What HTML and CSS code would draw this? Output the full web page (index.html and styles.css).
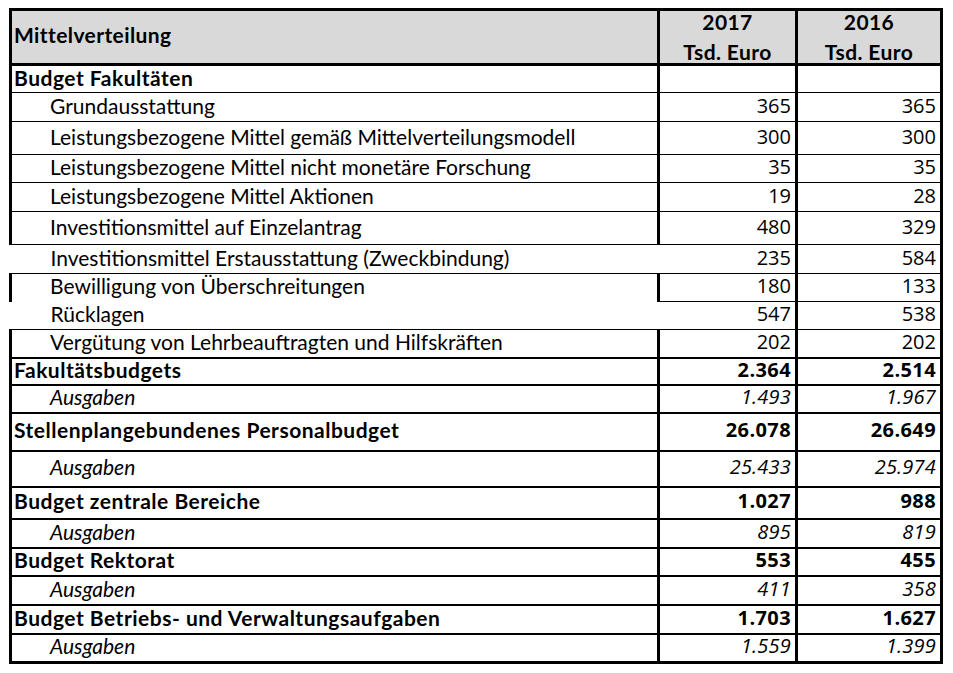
FILE: index.html
```html
<!DOCTYPE html>
<html lang="de">
<head>
<meta charset="utf-8">
<title>Mittelverteilung</title>
<link rel="stylesheet" href="styles.css">
</head>
<body>
<table class="budget">
  <colgroup>
    <col class="col-label">
    <col class="col-2017">
    <col class="col-2016">
  </colgroup>
  <thead>
    <tr class="head">
      <th class="label">Mittelverteilung</th>
      <th class="year"><span class="yr">2017</span><span class="unit">Tsd. Euro</span></th>
      <th class="year"><span class="yr">2016</span><span class="unit">Tsd. Euro</span></th>
    </tr>
  </thead>
  <tbody>
    <tr class="h28"><td class="label b">Budget Fakultäten</td><td></td><td></td></tr>
    <tr class="h29"><td class="label ind">Grundausstattung</td><td class="num">365</td><td class="num">365</td></tr>
    <tr class="h33"><td class="label ind">Leistungsbezogene Mittel gemäß Mittelverteilungsmodell</td><td class="num">300</td><td class="num">300</td></tr>
    <tr class="h28"><td class="label ind">Leistungsbezogene Mittel nicht monetäre Forschung</td><td class="num">35</td><td class="num">35</td></tr>
    <tr class="h29"><td class="label ind">Leistungsbezogene Mittel Aktionen</td><td class="num">19</td><td class="num">28</td></tr>
    <tr class="h33"><td class="label ind">Investitionsmittel auf Einzelantrag</td><td class="num">480</td><td class="num">329</td></tr>
    <tr class="h29 open"><td class="label ind">Investitionsmittel Erstausstattung (Zweckbindung)</td><td class="num">235</td><td class="num">584</td></tr>
    <tr class="h28"><td class="label ind">Bewilligung von Überschreitungen</td><td class="num">180</td><td class="num">133</td></tr>
    <tr class="h28 open open-top"><td class="label ind">Rücklagen</td><td class="num">547</td><td class="num">538</td></tr>
    <tr class="h28"><td class="label ind">Vergütung von Lehrbeauftragten und Hilfskräften</td><td class="num">202</td><td class="num">202</td></tr>
    <tr class="h27 sum"><td class="label b">Fakultätsbudgets</td><td class="num b">2.364</td><td class="num b">2.514</td></tr>
    <tr class="h28 sum"><td class="label ind i">Ausgaben</td><td class="num i">1.493</td><td class="num i">1.967</td></tr>
    <tr class="h38 sum"><td class="label b">Stellenplangebundenes Personalbudget</td><td class="num b">26.078</td><td class="num b">26.649</td></tr>
    <tr class="h36 sum"><td class="label ind i">Ausgaben</td><td class="num i">25.433</td><td class="num i">25.974</td></tr>
    <tr class="h32 sum"><td class="label b">Budget zentrale Bereiche</td><td class="num b">1.027</td><td class="num b">988</td></tr>
    <tr class="h29 sum"><td class="label ind i">Ausgaben</td><td class="num i">895</td><td class="num i">819</td></tr>
    <tr class="h28 sum"><td class="label b">Budget Rektorat</td><td class="num b">553</td><td class="num b">455</td></tr>
    <tr class="h29 sum"><td class="label ind i">Ausgaben</td><td class="num i">411</td><td class="num i">358</td></tr>
    <tr class="h29 sum"><td class="label b">Budget Betriebs- und Verwaltungsaufgaben</td><td class="num b">1.703</td><td class="num b">1.627</td></tr>
    <tr class="h29 sum"><td class="label ind i">Ausgaben</td><td class="num i">1.559</td><td class="num i">1.399</td></tr>
  </tbody>
</table>
</body>
</html>
```

FILE: styles.css
```css
html, body {
  margin: 0;
  padding: 0;
  background: #fff;
}

body {
  font-family: "Lato", "Open Sans", sans-serif;
  font-size: 21px;
  color: #000;
}

.budget {
  border-collapse: collapse;
  table-layout: fixed;
  width: 934px;
  margin: 8px 0 0 9px;
  border: 3px solid #000;
}

.col-label { width: 648px; }
.col-2017 { width: 138px; }
.col-2016 { width: 145px; }

.budget th,
.budget td {
  border: 1px solid #000;
  padding: 0 4px 3px 4px;
  vertical-align: middle;
  line-height: 20px;
  white-space: nowrap;
}

.budget th:nth-child(1),
.budget td:nth-child(1),
.budget th:nth-child(2),
.budget td:nth-child(2) {
  border-right: 3px solid #000;
}

.head th {
  background: #d9d9d9;
  border-bottom: 3px solid #000;
  font-weight: 700;
  letter-spacing: 0.4px;
}

.head { height: 55px; }

.head .label { text-align: left; padding-left: 2px; padding-bottom: 4px; }
.head .year {
  text-align: center;
  vertical-align: top;
  padding: 0 4px;
}
.yr { display: block; line-height: 22px; }
.unit { display: block; line-height: 22px; padding-top: 8px; }

.label { text-align: left; }
.label.ind { padding-left: 38px; }
.label.b { padding-left: 2px; }

.num {
  text-align: right;
  padding-right: 4px;
  font-family: "Open Sans", "Lato", sans-serif;
  font-size: 20px;
}

.b { font-weight: 700; letter-spacing: 0.5px; }
.num.b { letter-spacing: 0.4px; }
.i { font-style: italic; }
.num.i { letter-spacing: 0.2px; }

.sum td { border-top: 2px solid #000; border-bottom: 2px solid #000; }

/* rows where the first column lost its frame */
.open td:nth-child(1) {
  border-left-style: hidden;
  border-right-style: hidden;
  padding-left: 40px;
}
.open td:nth-child(2) { border-left-style: hidden; }
.open-top td:nth-child(1) { border-top-style: hidden; }

.h27 { height: 27px; }
.h28 { height: 28px; }
.h29 { height: 29px; }
.h32 { height: 32px; }
.h33 { height: 33px; }
.h36 { height: 36px; }
.h38 { height: 38px; }
```
